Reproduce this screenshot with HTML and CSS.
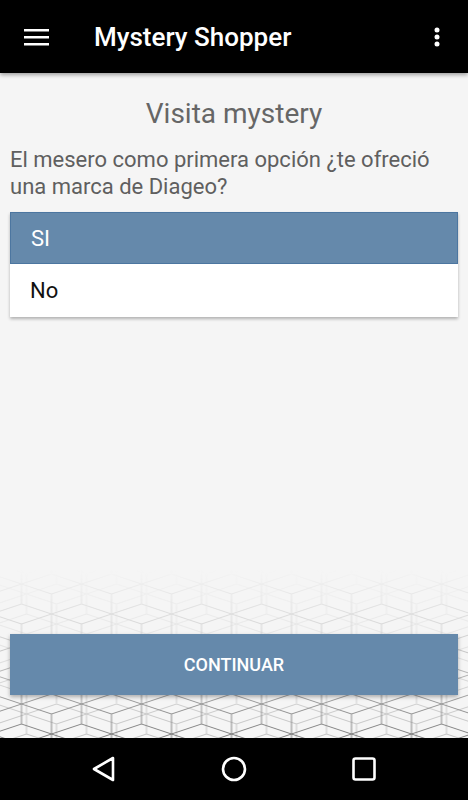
FILE: index.html
```html
<!DOCTYPE html>
<html lang="es">
<head>
    <meta charset="UTF-8">
    <meta name="viewport" content="width=device-width, initial-scale=1.0">
    <title>Mystery Shopper</title>
    <link rel="stylesheet" href="styles.css">
</head>
<body>

<div class="app">
    <header class="toolbar">
        <svg class="menu-icon" width="26" height="20" viewBox="0 0 26 20">
            <rect x="0" y="2" width="25" height="2.5" fill="#fff"/>
            <rect x="0" y="9" width="25" height="2.5" fill="#fff"/>
            <rect x="0" y="16" width="25" height="2.5" fill="#fff"/>
        </svg>
        <h1 class="toolbar-title">Mystery Shopper</h1>
        <svg class="more-icon" width="8" height="24" viewBox="0 0 8 24">
            <circle cx="4" cy="5" r="2.5" fill="#fff"/>
            <circle cx="4" cy="12" r="2.5" fill="#fff"/>
            <circle cx="4" cy="19" r="2.5" fill="#fff"/>
        </svg>
    </header>

    <main class="content">
        <svg class="backdrop" width="100%" height="168">
            <defs>
                <pattern id="cubes" width="60" height="60" patternUnits="userSpaceOnUse" patternTransform="translate(21.5 4)">
                    <path d="M0 10 L30 0 L60 10 M0 10 V30 M60 10 V30 M0 30 L30 40 L60 30 M30 20 L0 10 M30 20 L60 10 M30 20 V40 M30 40 V60 M0 50 L30 40 M60 50 L30 40 M0 50 V60 M60 50 V60 M0 0 V10 M60 0 V10" fill="none" stroke="#7e7e7e" stroke-width="1"/>
                </pattern>
                <pattern id="cubes2" width="60" height="60" patternUnits="userSpaceOnUse" patternTransform="translate(26.5 14)">
                    <path d="M0 10 L30 0 L60 10 M0 10 V30 M60 10 V30 M0 30 L30 40 L60 30 M30 20 L0 10 M30 20 L60 10 M30 20 V40 M30 40 V60 M0 50 L30 40 M60 50 L30 40 M0 50 V60 M60 50 V60 M0 0 V10 M60 0 V10" fill="none" stroke="#c2c2c2" stroke-width="1"/>
                </pattern>
                <linearGradient id="fade" x1="0" y1="0" x2="0" y2="1">
                    <stop offset="0" stop-color="#fff" stop-opacity="0"/>
                    <stop offset="0.4" stop-color="#fff" stop-opacity="0.3"/>
                    <stop offset="1" stop-color="#fff" stop-opacity="1"/>
                </linearGradient>
                <mask id="fadeMask">
                    <rect width="100%" height="100%" fill="url(#fade)"/>
                </mask>
            </defs>
            <g mask="url(#fadeMask)">
                <rect width="100%" height="100%" fill="url(#cubes2)"/>
                <rect width="100%" height="100%" fill="url(#cubes)"/>
            </g>
        </svg>

        <h2 class="visit-title">Visita mystery</h2>
        <p class="question">El mesero como primera opción ¿te ofreció una marca de Diageo?</p>

        <div class="options">
            <div class="option selected">SI</div>
            <div class="option">No</div>
        </div>

        <button class="continue-btn">CONTINUAR</button>
    </main>

    <nav class="nav-bar">
        <svg width="24" height="26" viewBox="0 0 24 26">
            <polygon points="21,2 2,13 21,24" fill="none" stroke="#fff" stroke-width="2.6" stroke-linejoin="round"/>
        </svg>
        <svg width="26" height="26" viewBox="0 0 26 26">
            <circle cx="13" cy="13" r="11" fill="none" stroke="#fff" stroke-width="2.6"/>
        </svg>
        <svg width="24" height="24" viewBox="0 0 24 24">
            <rect x="1.5" y="1.5" width="21" height="21" rx="2" fill="none" stroke="#fff" stroke-width="2.6"/>
        </svg>
    </nav>
</div>

</body>
</html>
```

FILE: styles.css
```css
* {
    box-sizing: border-box;
}
body {
    margin: 0;
    font-family: Roboto, "Liberation Sans", sans-serif;
    background-color: #000;
}
.app {
    width: 468px;
    height: 800px;
    display: flex;
    flex-direction: column;
}
.toolbar {
    height: 73px;
    background-color: #000;
    display: flex;
    align-items: center;
    padding: 0 27px 0 24px;
    position: relative;
    z-index: 2;
    box-shadow: 0 2px 4px rgba(0, 0, 0, 0.35);
}
.menu-icon {
    flex: none;
}
.toolbar-title {
    flex: 1;
    margin: 0 0 0 44px;
    color: #fff;
    font-size: 26px;
    font-weight: 500;
}
.more-icon {
    flex: none;
}
.content {
    flex: 1;
    background-color: #f5f5f5;
    display: flex;
    flex-direction: column;
    padding: 0 10px;
    position: relative;
    z-index: 0;
}
.backdrop {
    position: absolute;
    left: 0;
    bottom: 0;
    z-index: -1;
}
.visit-title {
    margin: 24px 0 0;
    text-align: center;
    font-size: 28px;
    font-weight: 400;
    line-height: 33px;
    color: #666;
}
.question {
    margin: 16px 0 0;
    font-size: 22px;
    line-height: 27px;
    color: #5f5f5f;
}
.options {
    margin-top: 12px;
    background-color: #fff;
    box-shadow: 0 2px 3px rgba(0, 0, 0, 0.28);
}
.option {
    height: 53px;
    display: flex;
    align-items: center;
    padding-left: 20px;
    font-size: 22px;
    color: #111;
}
.option.selected {
    height: 52px;
    background-color: #6589ab;
    border: 1px solid #4c76a0;
    color: #fff;
}
.continue-btn {
    margin: auto 0 43px;
    height: 61px;
    background-color: #6589ab;
    color: #fff;
    border: none;
    font-family: Roboto, "Liberation Sans", sans-serif;
    font-size: 18px;
    font-weight: 500;
    box-shadow: 0 2px 4px rgba(0, 0, 0, 0.3);
}
.nav-bar {
    height: 62px;
    background-color: #000;
    display: flex;
    align-items: center;
    justify-content: center;
    gap: 105px;
}
```
